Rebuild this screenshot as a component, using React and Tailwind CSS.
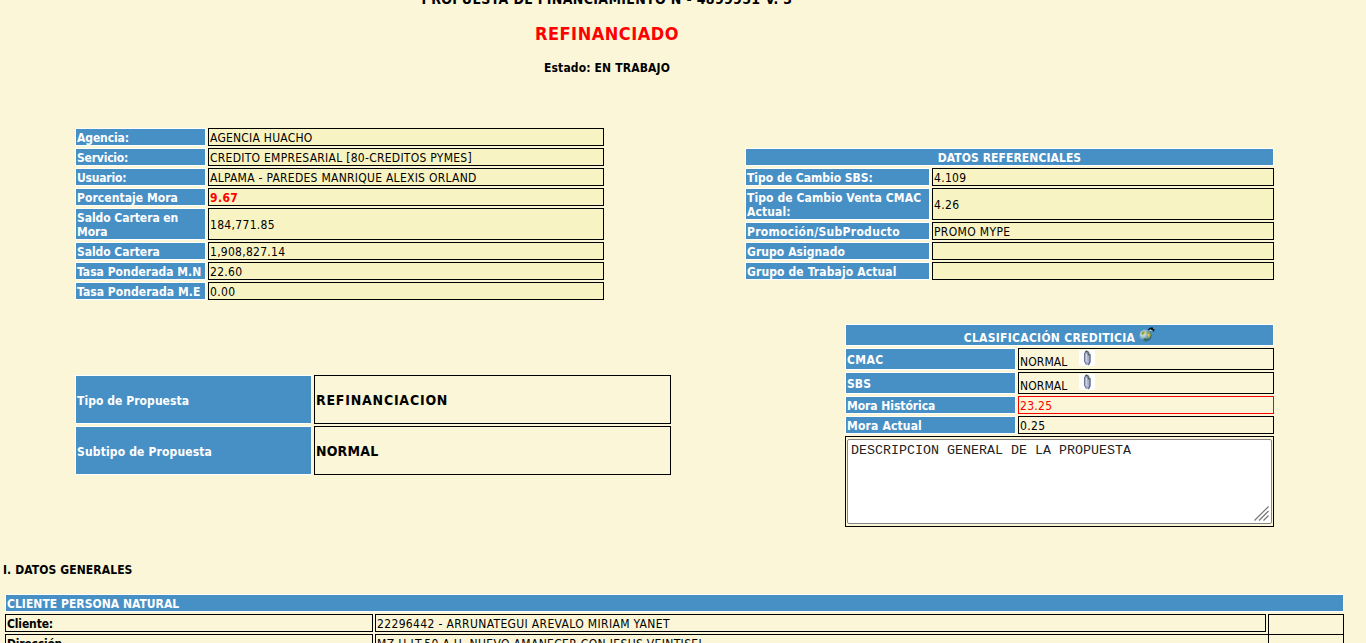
const label =
  "flex items-center border border-white bg-[#4790c5] px-px pt-0.5 font-bold text-white";
const value = "flex items-center border px-px pt-0.5";

function Label({ className = "", children }) {
  return (
    <div className={`${label} ${className}`}>
      <span>{children}</span>
    </div>
  );
}

function Value({ border = "border-black", className = "", children }) {
  return (
    <div className={`${value} ${border} ${className}`}>
      <span className="whitespace-pre">{children}</span>
    </div>
  );
}

function Globe() {
  return (
    <svg className="ml-1 h-4 w-4 shrink-0" viewBox="0 0 16 16">
      <defs>
        <radialGradient id="globe" cx="0.3" cy="0.35" r="0.75">
          <stop offset="0" stopColor="#eef6f6" />
          <stop offset="0.5" stopColor="#84b3c6" />
          <stop offset="1" stopColor="#1f4c68" />
        </radialGradient>
      </defs>
      <circle cx="6.500" cy="8.500" r="6" fill="url(#globe)" />
      <path d="M2 6 4 4l2 .5L5 7 3.500 8.500zM7.500 5.500l3-1L12 8l-1.500 3.500L9 10.500 8 8z" fill="#8aa64a" />
      <path d="M4.500 5.500 6 6 5.500 8zM8.500 6.500l2 .5-.5 3-1.300-1z" fill="#e6c654" />
      <path d="M4 12 6 13.500l3-.7-2.500-1.600z" fill="#2e6b3c" />
      <path d="M9.500 3 11 1.500h2" fill="none" stroke="#111" strokeWidth="1.500" />
      <path d="M12 0.500h2v1.500h1.300v2.500h-1.500V3H12z" fill="#111" />
      <path d="M10.500 2.800h2v1.200h-2z" fill="#d8d8d8" />
    </svg>
  );
}

function Clip() {
  return (
    <svg className="-mt-px ml-[11px] h-4 w-4 shrink-0 bg-white" viewBox="0 0 16 16">
      <path d="M5.500 2.500 7.500 0.800l2.500.7 1.500 3v7.500L9.500 15.500 7 14.500 5.500 11z" fill="#a3adc9" />
      <path d="M5.500 3v8.500l1.700 3" fill="none" stroke="#6a7390" strokeWidth="1" />
      <path d="M6 2.500 7.500 1l1.500 1 .5 3.500" fill="none" stroke="#4f5c50" strokeWidth="1.200" />
      <path d="M7.500 4v6.500l1 1.500" fill="none" stroke="#d3daec" strokeWidth="1.200" />
      <path d="M11 4v8L9.500 15" fill="none" stroke="#555d76" strokeWidth="1.100" />
    </svg>
  );
}

function ResizeGrip() {
  return (
    <svg className="pointer-events-none absolute right-[3px] bottom-[3px] h-[15px] w-[15px]" viewBox="0 0 15 15">
      <path d="M0.500 14.500 14.500 0.500M5 14.500 14.500 5M9.500 14.500l5-5" fill="none" stroke="#777" strokeWidth="1.200" />
    </svg>
  );
}

export default function App() {
  return (
    <div className="h-[643px] w-full overflow-hidden bg-[#faf6d7] font-['DejaVu_Sans_Condensed','DejaVu_Sans',sans-serif] text-[12px] leading-[14px] text-black">
      <div className="flex h-[128px] w-[1214px] flex-col items-center text-center font-bold whitespace-nowrap">
        <div className="-mt-[9px] text-[14px] leading-[17px] tracking-[0.34px]">
          PROPUESTA DE FINANCIAMIENTO N - 4899951 V. 3
        </div>
        <div className="mt-[15px] text-[18px] leading-[22px] tracking-[0.51px] text-[#ff0000]">
          REFINANCIADO
        </div>
        <div className="mt-[16px] tracking-[0.14px]">Estado: EN TRABAJO</div>
      </div>

      <div className="flex h-[435px] pl-[75px]">
        <div className="w-[670px]">
          <div className="grid w-[529px] grid-cols-[131px_396px] grid-rows-[18px_18px_18px_18px_32px_18px_18px_18px] gap-0.5">
            <Label className="tracking-[-0.1px]">Agencia:</Label>
            <Value className="bg-[#f8f3c3] tracking-[0.23px]">AGENCIA HUACHO</Value>
            <Label className="tracking-[-0.2px]">Servicio:</Label>
            <Value className="bg-[#f8f3c3] tracking-[0.27px]">CREDITO EMPRESARIAL [80-CREDITOS PYMES]</Value>
            <Label className="tracking-[-0.2px]">Usuario:</Label>
            <Value className="bg-[#f8f3c3] tracking-[0.27px]">ALPAMA - PAREDES MANRIQUE ALEXIS ORLAND</Value>
            <Label className="tracking-[0.06px]">Porcentaje Mora</Label>
            <Value className="bg-[#f8f3c3] font-bold tracking-[0.4px] text-[#ff0000]">9.67</Value>
            <Label className="tracking-[-0.05px]">Saldo Cartera en<br />Mora</Label>
            <Value className="bg-[#f8f3c3] tracking-[0.32px]">184,771.85</Value>
            <Label className="tracking-[-0.05px]">Saldo Cartera</Label>
            <Value className="bg-[#f8f3c3] tracking-[0.27px]">1,908,827.14</Value>
            <Label className="tracking-[0.02px]">Tasa Ponderada M.N</Label>
            <Value className="bg-[#f8f3c3] tracking-[0.32px]">22.60</Value>
            <Label className="tracking-[0.06px]">Tasa Ponderada M.E</Label>
            <Value className="bg-[#f8f3c3] tracking-[0.4px]">0.00</Value>
          </div>

          <div className="mt-[75px] grid w-[596px] grid-cols-[237px_357px] grid-rows-[49px_49px] gap-0.5">
            <Label className="tracking-[0.06px]">Tipo de Propuesta</Label>
            <Value className="pb-0.5 text-[14px] font-bold tracking-[0.78px]">REFINANCIACION</Value>
            <Label className="tracking-[0.15px]">Subtipo de Propuesta</Label>
            <Value className="pb-0.5 text-[14px] font-bold tracking-[0.18px]">NORMAL</Value>
          </div>
        </div>

        <div className="w-[529px] pt-5">
          <div className="grid grid-cols-[185px_342px] grid-rows-[18px_18px_32px_18px_18px_18px] gap-0.5">
            <Label className="col-span-2 justify-center tracking-[0.08px]">DATOS REFERENCIALES</Label>
            <Label>Tipo de Cambio SBS:</Label>
            <Value className="bg-[#f8f3c3] tracking-[0.32px]">4.109</Value>
            <Label className="tracking-[0.1px]">Tipo de Cambio Venta CMAC<br />Actual:</Label>
            <Value className="bg-[#f8f3c3] tracking-[0.4px]">4.26</Value>
            <Label className="tracking-[0.3px]">Promoción/SubProducto</Label>
            <Value className="bg-[#f8f3c3] tracking-[0.35px]">PROMO MYPE</Value>
            <Label className="tracking-[0.06px]">Grupo Asignado</Label>
            <Value className="bg-[#f8f3c3]" />
            <Label className="tracking-[0.12px]">Grupo de Trabajo Actual</Label>
            <Value className="bg-[#f8f3c3]" />
          </div>

          <div className="mt-[44px] ml-[100px] grid grid-cols-[171px_256px] grid-rows-[22px_22px_22px_18px_18px_91px] gap-0.5">
            <div className={`${label} col-span-2 justify-center pb-0.5`}>
              <span className="pt-1.5 tracking-[0.28px]">CLASIFICACIÓN CREDITICIA</span>
              <Globe />
            </div>
            <Label className="tracking-[0.39px]">CMAC</Label>
            <div className={`${value} items-start border-black`}>
              <span className="pt-1 tracking-[0.12px]">NORMAL</span>
              <Clip />
            </div>
            <Label className="tracking-[0.07px]">SBS</Label>
            <div className={`${value} items-start border-black`}>
              <span className="pt-1 tracking-[0.12px]">NORMAL</span>
              <Clip />
            </div>
            <Label className="tracking-[-0.05px]">Mora Histórica</Label>
            <Value border="border-[#ff0000]" className="tracking-[0.32px] text-[#ff0000]">23.25</Value>
            <Label className="tracking-[0.17px]">Mora Actual</Label>
            <Value className="tracking-[0.4px]">0.25</Value>
            <div className="col-span-2 border border-black px-px py-0.5">
              <div className="relative">
                <textarea
                  className="block h-[85px] w-full resize-none rounded-[2px] border border-[#858585] bg-white px-[3px] py-[3px] font-['Liberation_Mono',monospace] text-[13.333px] leading-[15px] text-[#222] outline-none"
                  defaultValue="DESCRIPCION GENERAL DE LA PROPUESTA"
                />
                <ResizeGrip />
              </div>
            </div>
          </div>
        </div>
      </div>

      <div className="h-[31px] pl-[3px] font-bold tracking-[0.1px]">I. DATOS GENERALES</div>

      <div className="ml-[5px] grid w-[1339px] grid-cols-[368px_891px_76px] grid-rows-[18px_18px_18px] gap-0.5">
        <Label className="col-span-3 tracking-[0.03px]">CLIENTE PERSONA NATURAL</Label>
        <Value className="font-bold tracking-[-0.14px]">Cliente:</Value>
        <Value className="tracking-[0.35px]">22296442 - ARRUNATEGUI AREVALO MIRIAM YANET</Value>
        <Value className="col-start-3 row-span-2 row-start-2" />
        <Value className="font-bold tracking-[-0.2px]">Dirección</Value>
        <Value className="col-span-2 col-start-2 row-start-3 tracking-[0.34px]">
          MZ.H LT.50 A.H. NUEVO AMANECER CON JESUS VEINTISEI
        </Value>
      </div>
    </div>
  );
}
